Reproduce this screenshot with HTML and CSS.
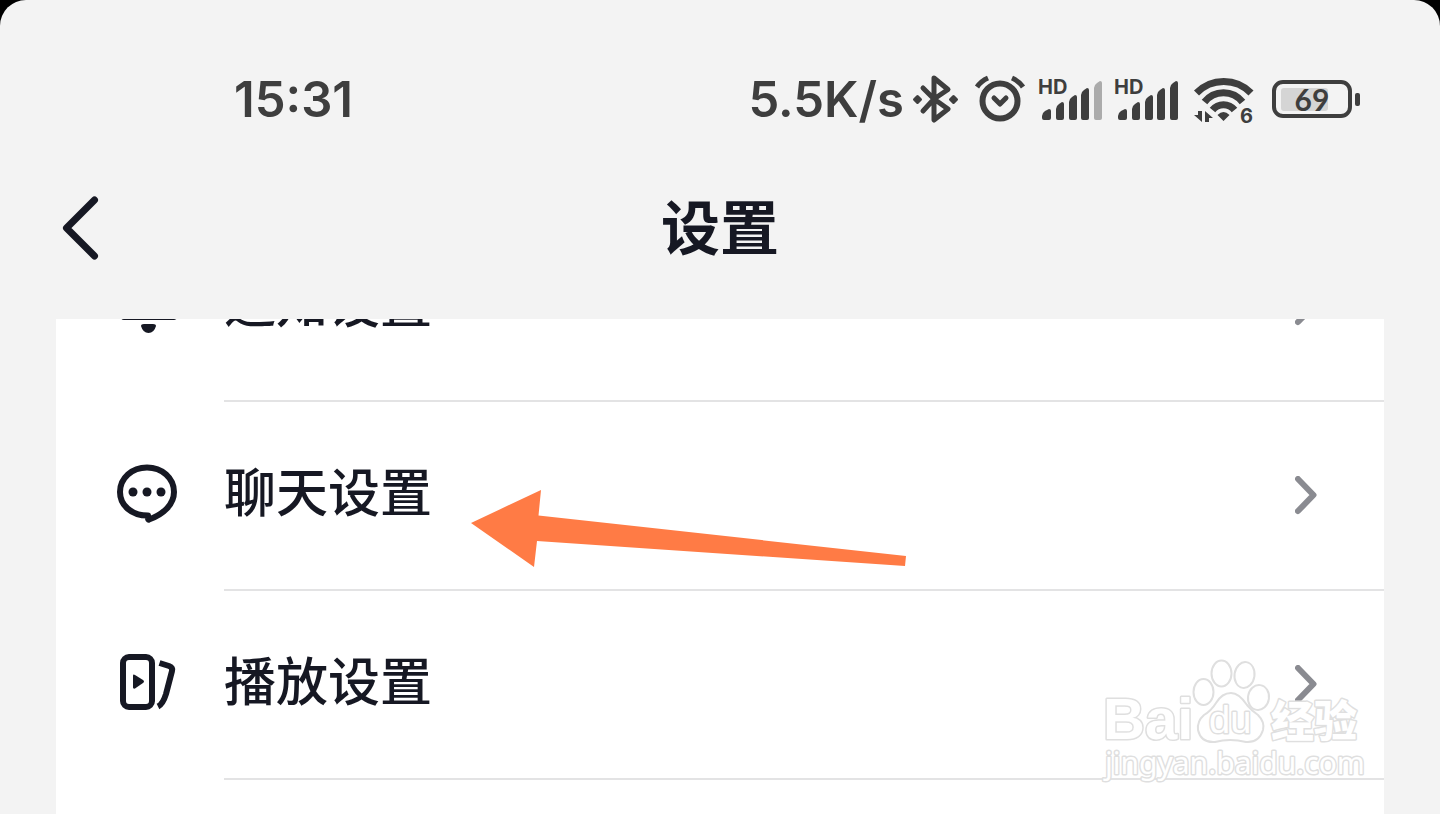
FILE: index.html
```html
<!DOCTYPE html>
<html lang="zh-CN">
<head>
<meta charset="utf-8">
<meta name="viewport" content="width=device-width, initial-scale=1">
<title>设置</title>
<link rel="stylesheet" href="styles.css">
</head>
<body>
<div class="screen">
  <div class="status-bar">
    <time class="clock">15:31</time>
    <div class="status-icons">
      <span class="speed">5.5K/s</span>
      <svg class="glyph" width="49" height="50" viewBox="0 0 49 50" aria-label="蓝牙">
        <path class="line" stroke-width="5" d="M10 13 21 24 35 34 21 45V3L35 14.500 21 24 10 36"/>
        <path class="knob" d="M4.500 21.500 7.500 24.500 4.500 27.500 1.500 24.500ZM40.500 21.500 43.500 24.500 40.500 27.500 37.500 24.500Z"/>
      </svg>
      <svg class="glyph" width="52" height="50" viewBox="0 0 52 50" aria-label="闹钟">
        <circle class="line" stroke-width="6" cx="26" cy="26" r="17.500"/>
        <path class="line" stroke-width="5" d="M20 23 26 29 32 23"/>
        <path class="line butt" stroke-width="5" d="M3 12Q7 6 14 3M49 12Q45 6 38 3"/>
      </svg>
      <svg class="glyph" width="64" height="50" viewBox="0 0 64 50" aria-label="信号一">
        <text class="hd" x="0" y="19">HD</text>
        <path d="M4 41Q4 38 7 36L11 34Q13 34 13 36V43Q13 45 11 45H6Q4 45 4 43ZM18 34Q18 31 21 29L24 27Q26 27 26 29V43Q26 45 24 45H20Q18 45 18 43ZM31 27Q31 24 34 22L37 20Q39 20 39 22V43Q39 45 37 45H33Q31 45 31 43ZM43 20Q43 17 46 15L49 13Q51 13 51 15V43Q51 45 49 45H45Q43 45 43 43Z"/>
        <path class="faint" d="M56 13Q56 10 59 8L62 6Q64 6 64 8V43Q64 45 62 45H58Q56 45 56 43Z"/>
      </svg>
      <svg class="glyph" width="64" height="50" viewBox="0 0 64 50" aria-label="信号二">
        <text class="hd" x="0" y="19">HD</text>
        <path d="M4 41Q4 38 7 36L11 34Q13 34 13 36V43Q13 45 11 45H6Q4 45 4 43ZM18 34Q18 31 21 29L24 27Q26 27 26 29V43Q26 45 24 45H20Q18 45 18 43ZM31 27Q31 24 34 22L37 20Q39 20 39 22V43Q39 45 37 45H33Q31 45 31 43ZM43 20Q43 17 46 15L49 13Q51 13 51 15V43Q51 45 49 45H45Q43 45 43 43ZM56 13Q56 10 59 8L62 6Q64 6 64 8V43Q64 45 62 45H58Q56 45 56 43Z"/>
      </svg>
      <svg class="glyph" width="64" height="50" viewBox="0 0 64 50" aria-label="无线网络">
        <path class="line butt" stroke-width="7" d="M6.500 18A38 38 0 0 1 61 18M14.500 27A24 24 0 0 1 52.500 27M22.500 35A14 14 0 0 1 44.500 35"/>
        <path d="M27.500 40Q33.500 34 39.500 40L33.500 46ZM8 36H12V47L4 40H8ZM15 47V36L23 43H19V47Z"/>
        <text class="wifi-gen" x="50" y="48">6</text>
      </svg>
      <svg class="glyph" width="94" height="50" viewBox="0 0 94 50" aria-label="电量">
        <rect class="charge" x="15" y="13" width="47" height="23" rx="3"/>
        <rect class="line" stroke-width="4" x="8" y="7" width="76" height="34" rx="9"/>
        <rect x="89" y="18" width="5" height="13" rx="2"/>
        <text class="percent" x="46" y="36" text-anchor="middle">69</text>
      </svg>
    </div>
  </div>

  <header class="title-bar">
    <button class="back" type="button" aria-label="返回">
      <svg width="42" height="70" viewBox="0 0 42 70"><path d="M34.500 7 6.500 35 34.500 63"/></svg>
    </button>
    <h1 class="title">设置</h1>
  </header>

  <main class="viewport">
    <ul class="list">
      <li><a class="row" href="#notify">
        <svg class="icon" width="64" height="64" viewBox="0 0 64 64">
          <path class="stroke" d="M8 43Q13 37 13 26Q14 7 33 5Q52 7 53 26Q53 37 58 43Z"/>
          <path d="M25 52Q25 50 28 50H37Q40 50 40 52Q38 59 32.500 59Q27 59 25 52Z"/>
        </svg>
        <span class="content"><span class="label">通知设置</span>
          <svg class="chevron" width="24" height="40" viewBox="0 0 24 40"><path d="M3 3 18.500 19 3 35"/></svg></span>
      </a></li>
      <li><a class="row" href="#chat">
        <svg class="icon" width="64" height="64" viewBox="0 0 64 64">
          <path class="stroke" d="M31 4.500C46 4.500 58 15 58 29C58 41 48 51 33 56.500Q32 57 32 55V52.500C15 52.500 4 42 4 29C4 15 16 4.500 31 4.500Z"/>
          <circle cx="17" cy="29" r="4.500"/><circle cx="31" cy="29" r="4.500"/><circle cx="45" cy="29" r="4.500"/>
        </svg>
        <span class="content"><span class="label">聊天设置</span>
          <svg class="chevron" width="24" height="40" viewBox="0 0 24 40"><path d="M3 3 18.500 19 3 35"/></svg></span>
      </a></li>
      <li><a class="row" href="#play">
        <svg class="icon" width="64" height="64" viewBox="0 0 64 64">
          <rect class="stroke" x="7" y="5" width="29" height="50" rx="6"/>
          <path d="M17 23.500Q17 22 19 23L27 28Q29 29.500 27 31L19 36.500Q17 37 17 35.500Z"/>
          <path class="stroke butt" d="M43.500 11 53 14Q57 15.500 56 19L50 42Q47 52 42 54.500"/>
        </svg>
        <span class="content"><span class="label">播放设置</span>
          <svg class="chevron" width="24" height="40" viewBox="0 0 24 40"><path d="M3 3 18.500 19 3 35"/></svg></span>
      </a></li>
    </ul>
    <svg class="pointer" width="436" height="78" viewBox="0 0 436 78" aria-hidden="true">
      <path d="M0 34 70 1 67.500 26.500 435 67 434 77 66 52 63 78Z"/>
    </svg>
    <svg class="watermark" width="270" height="136" viewBox="0 0 270 136" role="img" aria-label="Baidu 经验">
      <g class="mark">
        <ellipse cx="103.500" cy="37" rx="10" ry="13"/>
        <ellipse cx="121.500" cy="18.500" rx="10" ry="13"/>
        <ellipse cx="144.500" cy="20" rx="10" ry="13" transform="rotate(8 144.500 20)"/>
        <ellipse cx="158.500" cy="42.500" rx="10.500" ry="12.500" transform="rotate(8 158.500 42.500)"/>
        <path d="M131 38Q139 38 147 50Q152 56 158 60Q165 67 163 75Q159 88 146 87Q130 83 115 87Q101 88 98 75Q97 66 104 60Q111 56 116 48Q122 38 131 38Z"/>
        <text class="wm-bai" x="3" y="84">Bai</text>
        <text class="wm-du" x="109" y="78">du</text>
        <text class="wm-cjk" x="171" y="82">经验</text>
        <text class="wm-url" x="5" y="119">jingyan.baidu.com</text>
      </g>
    </svg>
  </main>
</div>
</body>
</html>
```

FILE: styles.css
```css
* {
  box-sizing: border-box;
}

html,
body {
  margin: 0;
  background: #000;
}

body {
  font-family: "Noto Sans CJK SC", sans-serif;
  color: #161823;
}

.screen {
  display: flex;
  flex-direction: column;
  height: 100vh;
  background: #f3f3f3;
  border-radius: 26px 26px 0 0;
  overflow: hidden;
}

/* Status bar */
.status-bar {
  display: flex;
  justify-content: space-between;
  align-items: center;
  padding: 60px 80px 0 234px;
  font-family: Inter, Lato, sans-serif;
  font-weight: 600;
  color: #3e3e3e;
}

.clock,
.speed {
  font-size: 49px;
  line-height: 80px;
}

.status-icons {
  display: flex;
  align-items: center;
  gap: 12px;
}

.speed {
  margin-right: -3px;
}

.glyph {
  display: block;
  fill: #3e3e3e;
  overflow: visible;
}

.line {
  fill: none;
  stroke: #3e3e3e;
  stroke-linecap: round;
  stroke-linejoin: round;
}

.knob {
  stroke: #3e3e3e;
  stroke-width: 3px;
  stroke-linejoin: round;
}

.butt {
  stroke-linecap: butt;
}

.faint {
  fill: #ababab;
}

.charge {
  fill: #d5d5d5;
}

.hd {
  font-size: 20px;
  font-weight: 700;
}

.wifi-gen {
  font-size: 20px;
  font-weight: 700;
}

.percent {
  font-family: Lato, sans-serif;
  font-size: 30px;
  font-weight: 700;
}

/* Title bar */
.title-bar {
  display: grid;
  grid-template-columns: 1fr auto 1fr;
  align-items: center;
  height: 179px;
  padding: 0 60px 4px;
}

.back {
  justify-self: start;
  padding: 0;
  border: 0;
  background: none;
}

.back svg,
.chevron,
.icon {
  display: block;
  flex: none;
}

.back path {
  fill: none;
  stroke: #161823;
  stroke-width: 7px;
  stroke-linecap: round;
  stroke-linejoin: round;
}

.title {
  margin: 0;
  padding-bottom: 6px;
  font-size: 59px;
  line-height: 80px;
  font-weight: 700;
}

/* Scrolled settings list */
.viewport {
  position: relative;
  flex: 1;
  margin: 0 56px;
  background: #fff;
  overflow: hidden;
}

.list {
  margin: -106px 0 0;
  padding: 0;
  list-style: none;
}

.row {
  display: flex;
  align-items: center;
  gap: 44px;
  padding-left: 60px;
  color: inherit;
  text-decoration: none;
}

.content {
  display: flex;
  flex: 1;
  align-items: center;
  justify-content: space-between;
  height: 189px;
  padding-right: 65px;
  border-bottom: 2px solid #e3e3e4;
}

.label {
  padding-bottom: 11px;
  font-size: 52px;
  line-height: 76px;
  font-weight: 500;
}

.icon {
  margin-bottom: 4px;
  fill: #161823;
}

.stroke {
  fill: none;
  stroke: #161823;
  stroke-width: 6px;
  stroke-linejoin: round;
}

.chevron path {
  fill: none;
  stroke: #8a8b91;
  stroke-width: 6px;
  stroke-linecap: round;
  stroke-linejoin: round;
}

/* Annotation arrow and watermark lie over the list */
.pointer {
  position: absolute;
  left: 415px;
  top: 170px;
  fill: #ff7b45;
}

.watermark {
  position: absolute;
  right: 14px;
  bottom: 23px;
}

.mark {
  fill: #fff;
  stroke: #dfdfdf;
  stroke-width: 2px;
}

.mark text {
  paint-order: stroke;
  stroke-width: 3px;
  stroke-linejoin: round;
}

.wm-bai {
  font: 700 58px "Liberation Sans", sans-serif;
}

.wm-du {
  font: 400 38px "Liberation Sans", sans-serif;
}

.wm-cjk {
  font: 900 43px "Noto Sans CJK SC", sans-serif;
}

.wm-url {
  font: 400 30px "Noto Sans", sans-serif;
}
```
